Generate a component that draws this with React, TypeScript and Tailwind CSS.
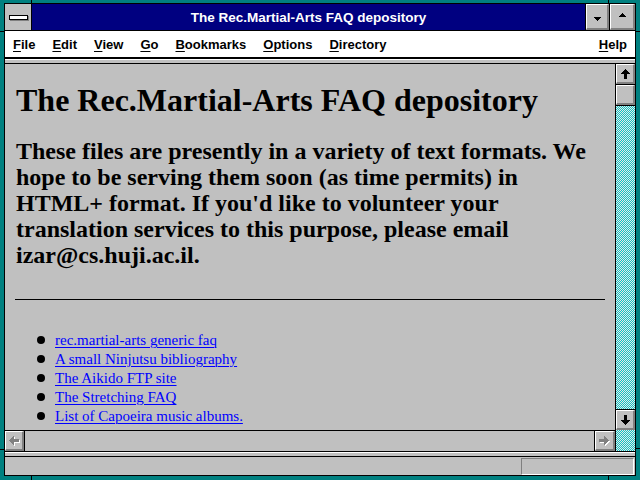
import React from "react";

const UP = "M4 0h1v1h1v1h1v1h1v1h1v1H6v5H3V5H0V4h1V3h1V2h1V1h1z";
const LEFT = "M0 4v1h1v1h1v1h1v1h1v1h1V6h5V3H5V0H4v1H3v1H2v1H1v1z";
const TRI = "M0 0h7v1H6v1H5v1H4v1H3V3H2V2H1V1H0z";

function VArrow({ down }: { down?: boolean }) {
  return (
    <svg width="9" height="10" viewBox="0 0 9 10" shapeRendering="crispEdges">
      <path d={UP} fill="#000" transform={down ? "matrix(1 0 0 -1 0 10)" : undefined} />
    </svg>
  );
}

function HArrow({ right }: { right?: boolean }) {
  const t = right ? "matrix(-1 0 0 1 10 0)" : undefined;
  return (
    <svg width="11" height="10" viewBox="0 0 11 10" shapeRendering="crispEdges">
      <g transform="translate(1 1)">
        <path d={LEFT} fill="#fff" transform={t} />
      </g>
      <path d={LEFT} fill="#808080" transform={t} />
    </svg>
  );
}

function Tri({ up }: { up?: boolean }) {
  return (
    <svg width="7" height="4" viewBox="0 0 7 4" shapeRendering="crispEdges">
      <path d={TRI} fill="#000" transform={up ? "matrix(1 0 0 -1 0 4)" : undefined} />
    </svg>
  );
}

function Bevel({ children, className = "" }: { children?: React.ReactNode; className?: string }) {
  return (
    <div
      className={
        "w-full h-full bg-[#c0c0c0] border-t border-l border-t-white border-l-white border-r-2 border-b-2 border-r-[#808080] border-b-[#808080] flex items-center justify-center " +
        className
      }
    >
      {children}
    </div>
  );
}

function MenuItem({ k, rest }: { k: string; rest: string }) {
  return (
    <span className="whitespace-nowrap">
      <span className="underline underline-offset-[2px] decoration-1">{k}</span>
      {rest}
    </span>
  );
}

const links = [
  "rec.martial-arts generic faq",
  "A small Ninjutsu bibliography",
  "The Aikido FTP site",
  "The Stretching FAQ",
  "List of Capoeira music albums.",
  "The Capoeira FAQ",
];

export default function App() {
  return (
    <div className="relative w-[640px] h-[480px] bg-[#008080] pt-[3px] px-[4px] pb-[4px] overflow-hidden font-['Liberation_Sans',Arial,sans-serif]">
      {/* frame corner ticks */}
      <div className="absolute left-[31px] top-0 w-px h-[3px] bg-black" />
      <div className="absolute left-[608px] top-0 w-px h-[3px] bg-black" />
      <div className="absolute left-[31px] bottom-0 w-px h-[4px] bg-black" />
      <div className="absolute left-[608px] bottom-0 w-px h-[4px] bg-black" />
      <div className="absolute left-0 top-[31px] w-[4px] h-px bg-black" />
      <div className="absolute left-0 top-[449px] w-[4px] h-px bg-black" />
      <div className="absolute right-0 top-[31px] w-[4px] h-px bg-black" />
      <div className="absolute right-0 top-[448px] w-[4px] h-px bg-black" />

      <div className="h-full border border-black flex flex-col bg-[#c0c0c0]">
        {/* title bar */}
        <div className="h-[26px] flex shrink-0">
          <div className="w-[27px] border-r border-black bg-[#c0c0c0] flex items-center justify-center">
            <div className="w-[19px] h-[5px] bg-white border border-black shadow-[1px_1px_0_#808080]" />
          </div>
          <div className="flex-1 bg-[#000080] text-white font-bold text-[13.5px] pt-[3px] flex items-center justify-center whitespace-nowrap">
            The Rec.Martial-Arts FAQ depository
          </div>
          <div className="w-[24px] border-l border-black">
            <Bevel>
              <div className="mt-[5px]">
                <Tri />
              </div>
            </Bevel>
          </div>
          <div className="w-[26px] border-l border-black">
            <Bevel>
              <div className="mb-[4px]">
                <Tri up />
              </div>
            </Bevel>
          </div>
        </div>

        {/* menu bar */}
        <div className="h-[27px] shrink-0 border-t border-black bg-white flex items-center pt-[2px] pl-[8px] pr-[8px] gap-[17px] text-[13px] font-bold text-black">
          <MenuItem k="F" rest="ile" />
          <MenuItem k="E" rest="dit" />
          <MenuItem k="V" rest="iew" />
          <MenuItem k="G" rest="o" />
          <MenuItem k="B" rest="ookmarks" />
          <MenuItem k="O" rest="ptions" />
          <MenuItem k="D" rest="irectory" />
          <span className="ml-auto">
            <MenuItem k="H" rest="elp" />
          </span>
        </div>

        {/* toolbar strip */}
        <div className="h-[7px] shrink-0 border-t-2 border-b border-black bg-[#c0c0c0]">
          <div className="h-px bg-white" />
        </div>

        {/* main */}
        <div className="h-[387px] shrink-0 flex">
          <div className="flex-1 flex flex-col min-w-0">
            <div className="h-[366px] overflow-hidden bg-[#c0c0c0] px-[10px] font-['Liberation_Serif','Times_New_Roman',serif] text-black">
              <h1 className="mt-[18px] pl-[1px] text-[32px] leading-[36px] font-bold whitespace-nowrap">
                The Rec.Martial-Arts FAQ depository
              </h1>
              <p className="mt-[20px] pl-[1px] text-[24px] leading-[26px] font-bold whitespace-nowrap">
                These files are presently in a variety of text formats. We
                <br />
                hope to be serving them soon (as time permits) in
                <br />
                HTML+ format. If you'd like to volunteer your
                <br />
                translation services to this purpose, please email
                <br />
                izar@cs.huji.ac.il.
              </p>
              <div className="mt-[31px] h-px bg-black" />
              <ul className="mt-[31px] pl-[22px]">
                {links.map((l) => (
                  <li key={l} className="flex items-start text-[15px] leading-[19px]">
                    <span className="mt-[5px] w-[8px] h-[8px] rounded-full bg-black shrink-0 mr-[10px]" />
                    <a className="text-[#0000ff] underline decoration-1 underline-offset-[2px] whitespace-nowrap">{l}</a>
                  </li>
                ))}
              </ul>
            </div>
            {/* horizontal scrollbar */}
            <div className="h-[21px] border-t border-black flex">
              <div className="w-[20px] border-r border-black">
                <Bevel>
                  <HArrow />
                </Bevel>
              </div>
              <div className="flex-1 bg-[#c0c0c0]" />
              <div className="w-[21px] border-l border-black">
                <Bevel>
                  <HArrow right />
                </Bevel>
              </div>
            </div>
          </div>
          {/* vertical scrollbar */}
          <div className="w-[20px] border-l border-black flex flex-col">
            <div className="h-[21px] border-b border-black">
              <Bevel>
                <VArrow />
              </Bevel>
            </div>
            <div className="h-[21px] border-b border-black">
              <Bevel />
            </div>
            <div className="flex-1 bg-[#c0c0c0] bg-[image:repeating-conic-gradient(#10c4c4_0%_25%,#e8e8e8_0%_50%)] bg-[length:2px_2px]" />
            <div className="h-[21px] border-t border-black">
              <Bevel>
                <VArrow down />
              </Bevel>
            </div>
            <div className="h-[21px] bg-[#c0c0c0] bg-[image:repeating-conic-gradient(#10c4c4_0%_25%,#e8e8e8_0%_50%)] bg-[length:2px_2px]" />
          </div>
        </div>

        {/* separator */}
        <div className="h-[6px] shrink-0 border-t border-b border-black bg-[#c0c0c0]">
          <div className="h-px bg-white" />
        </div>

        {/* status bar */}
        <div className="flex-1 flex justify-end items-start pt-[1px] pr-[1px] bg-[#c0c0c0]">
          <div className="w-[113px] h-[17px] border border-t-[#808080] border-l-[#808080] border-b-white border-r-white" />
        </div>
      </div>
    </div>
  );
}
